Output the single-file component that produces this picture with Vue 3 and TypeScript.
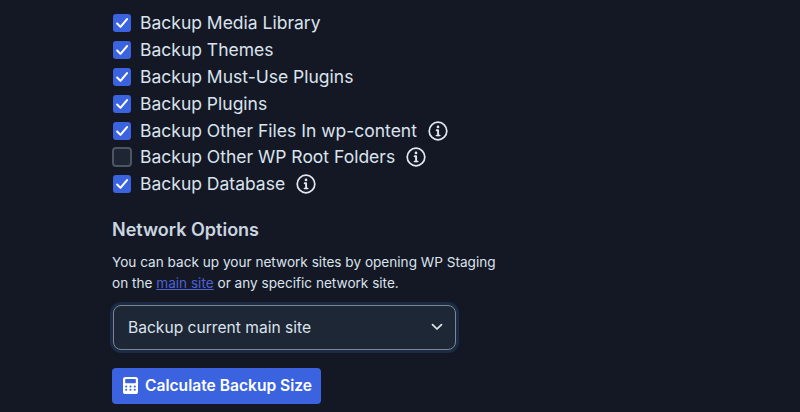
<script setup lang="ts">
interface Item { label: string; checked: boolean; info: boolean }
const items: Item[] = [
  { label: 'Backup Media Library', checked: true, info: false },
  { label: 'Backup Themes', checked: true, info: false },
  { label: 'Backup Must-Use Plugins', checked: true, info: false },
  { label: 'Backup Plugins', checked: true, info: false },
  { label: 'Backup Other Files In wp-content', checked: true, info: true },
  { label: 'Backup Other WP Root Folders', checked: false, info: true },
  { label: 'Backup Database', checked: true, info: true },
]
</script>

<template>
  <div class="page">
    <ul class="list">
      <li v-for="item in items" :key="item.label" class="row">
        <span class="box" :class="{ on: item.checked }">
          <svg v-if="item.checked" viewBox="0 0 20 20" width="18" height="18" fill="none">
            <path d="M4.6 10.6 8.3 14.3 15.6 5.7" stroke="#fff" stroke-width="2.3" stroke-linecap="round" stroke-linejoin="round" />
          </svg>
        </span>
        <span class="label">{{ item.label }}</span>
        <svg v-if="item.info" class="info" viewBox="0 0 20 20" width="20" height="20" fill="none">
          <circle cx="10" cy="10" r="8.8" stroke="#e2e8f0" stroke-width="1.7" />
          <circle cx="10" cy="5.9" r="1.35" fill="#e2e8f0" />
          <path d="M8.7 9.3H10.1V14.3" stroke="#e2e8f0" stroke-width="1.9" stroke-linecap="round" stroke-linejoin="round" />
          <path d="M8.4 14.5H11.8" stroke="#e2e8f0" stroke-width="1.6" stroke-linecap="round" />
        </svg>
      </li>
    </ul>

    <h3 class="heading">Network Options</h3>
    <p class="desc">You can back up your network sites by opening WP Staging<br />on the <a class="link" href="#">main site</a> or any specific network site.</p>

    <div class="select">
      <span>Backup current main site</span>
      <svg viewBox="0 0 12 8" width="12" height="8" fill="none">
        <path d="M1.5 1.6 6 6 10.5 1.6" stroke="#e2e8f0" stroke-width="1.7" stroke-linecap="round" stroke-linejoin="round" />
      </svg>
    </div>

    <button class="btn" type="button">
      <svg viewBox="0 0 448 512" width="15" height="19">
        <path fill="#fff" fill-rule="evenodd" d="M64 0C29 0 0 29 0 64v384c0 35 29 64 64 64h320c35 0 64-29 64-64V64c0-35-29-64-64-64H64zm32 64h256c18 0 32 14 32 32v64c0 18-14 32-32 32H96c-18 0-32-14-32-32V96c0-18 14-32 32-32zm0 192a32 32 0 1 1 0 64 32 32 0 1 1 0-64zm96 32a32 32 0 1 1 64 0 32 32 0 1 1-64 0zm160-32a32 32 0 1 1 0 64 32 32 0 1 1 0-64zM64 384a32 32 0 1 1 64 0 32 32 0 1 1-64 0zm128 0a32 32 0 1 1 64 0 32 32 0 1 1-64 0zm160-32a32 32 0 1 1 0 64 32 32 0 1 1 0-64z" />
      </svg>
      <span>Calculate Backup Size</span>
    </button>
  </div>
</template>

<style>
html, body { margin: 0; background: #141824; }
</style>

<style scoped>
.page {
  width: 800px;
  height: 412px;
  box-sizing: border-box;
  padding: 10px 0 0 112px;
  background: #141824;
  color: #e2e8f0;
  font-family: Inter, "Liberation Sans", sans-serif;
  overflow: hidden;
}
.list { list-style: none; margin: 0; padding: 0; }
.row { display: flex; align-items: center; height: 26.8px; }
.box {
  width: 20px;
  height: 20px;
  margin: 0 8px 0 0;
  border-radius: 4px;
  box-sizing: border-box;
  background: #1e2533;
  border: 2px solid #4b5563;
  flex: none;
}
.box.on { width: 18px; height: 18px; margin: 0 9px 0 1px; border-radius: 3px; background: #3b63e0; border: 0; }
.box svg { display: block; }
.label { font-size: 17.5px; line-height: 24px; color: #dbe3ee; white-space: nowrap; }
.info { margin-left: 11px; flex: none; }
.heading {
  margin: 20px 0 0;
  font-size: 18px;
  line-height: 24px;
  font-weight: 600;
  color: #cbd5e1;
}
.desc {
  margin: 10px 0 0;
  font-size: 13.6px;
  line-height: 21px;
  color: #dbe3ee;
  white-space: nowrap;
}
.link { color: #4c62d8; text-decoration: underline; }
.select {
  width: 343px;
  height: 45px;
  margin: 11px 0 0 1px;
  padding: 0 12px 0 14px;
  box-sizing: border-box;
  display: flex;
  align-items: center;
  justify-content: space-between;
  border: 1px solid #7d8794;
  border-radius: 8px;
  background: #1e2735;
  box-shadow: 0 0 0 3px #1b2a45;
  color: #dbe3ee;
  font-size: 15.6px;
}
.btn {
  margin-top: 18px;
  width: 209px;
  height: 36px;
  padding: 0 0 0 11px;
  display: flex;
  align-items: center;
  gap: 7px;
  border: 0;
  border-radius: 4px;
  background: #3b63e0;
  color: #fff;
  font-family: inherit;
  font-size: 15.6px;
  font-weight: 600;
}
</style>
